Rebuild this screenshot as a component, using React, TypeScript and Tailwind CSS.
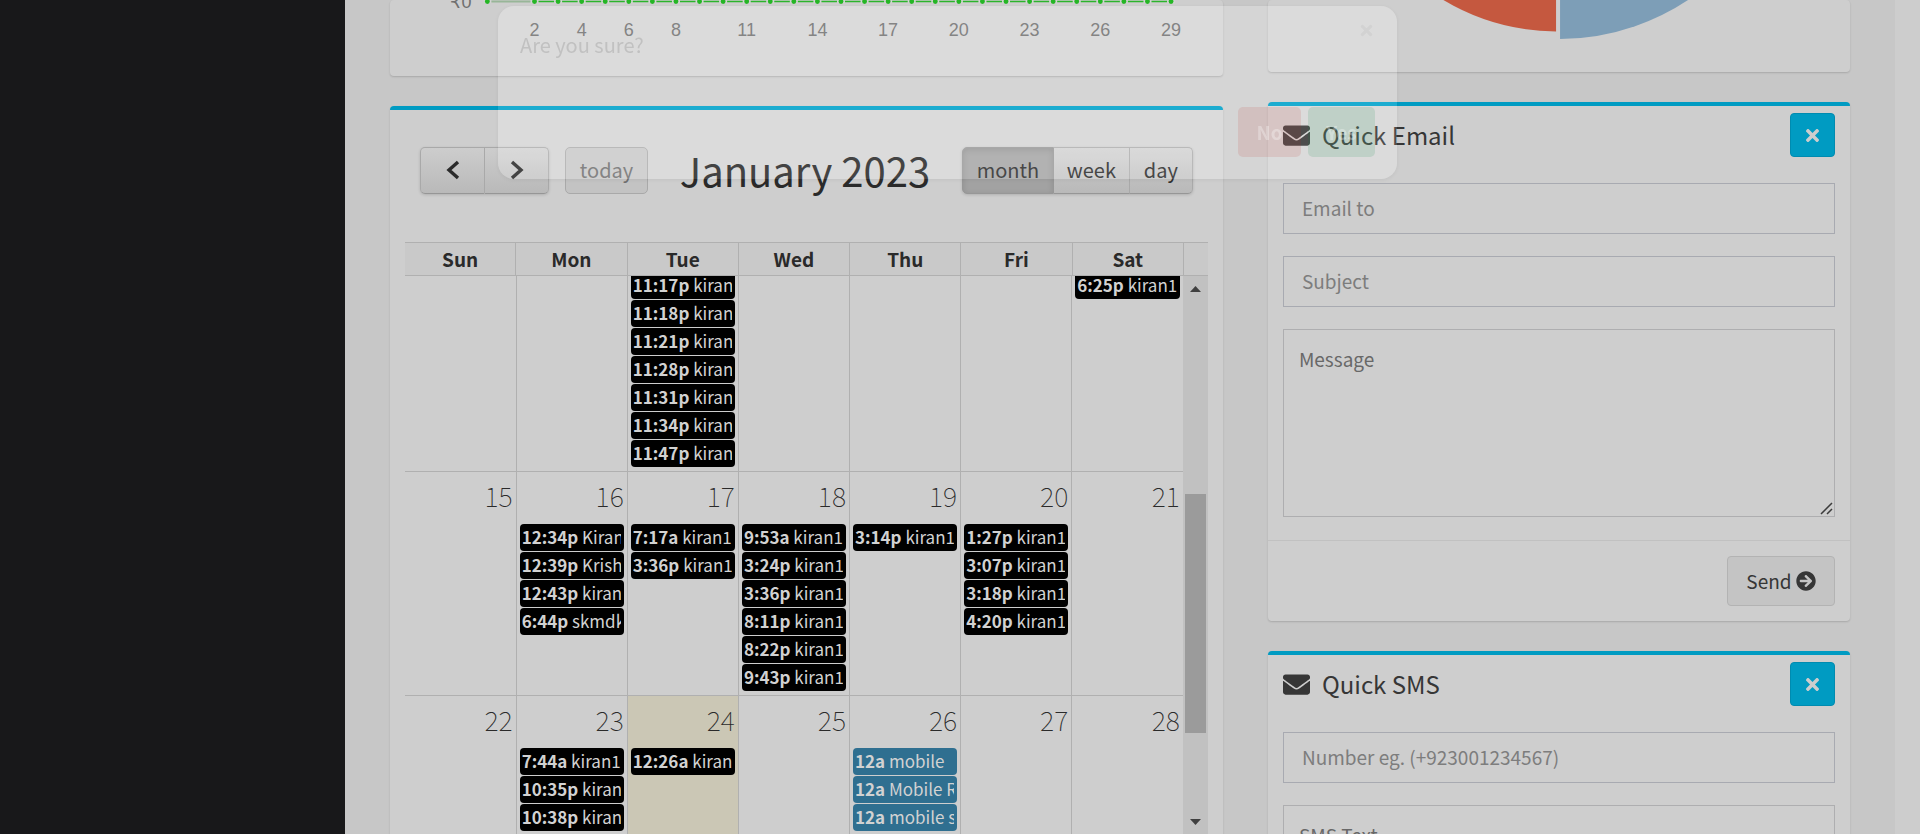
import React from "react";
import { FaArrowCircleRight, FaEnvelope, FaTimes } from "react-icons/fa";

type CalendarEvent = { time: string; title: string; blue?: boolean };
type Day = { date: number; today?: boolean; events: CalendarEvent[] };

const ev = (time: string, title: string, blue = false): CalendarEvent => ({ time, title, blue });

const weeks: Day[][] = [
  [
    { date: 15, events: [] },
    {
      date: 16,
      events: [ev("12:34p", "Kiran"), ev("12:39p", "Krishna"), ev("12:43p", "kiran1"), ev("6:44p", "skmdk")],
    },
    { date: 17, events: [ev("7:17a", "kiran1"), ev("3:36p", "kiran1")] },
    {
      date: 18,
      events: [
        ev("9:53a", "kiran1"),
        ev("3:24p", "kiran1"),
        ev("3:36p", "kiran1"),
        ev("8:11p", "kiran1"),
        ev("8:22p", "kiran1"),
        ev("9:43p", "kiran1"),
      ],
    },
    { date: 19, events: [ev("3:14p", "kiran1")] },
    {
      date: 20,
      events: [ev("1:27p", "kiran1"), ev("3:07p", "kiran1"), ev("3:18p", "kiran1"), ev("4:20p", "kiran1")],
    },
    { date: 21, events: [] },
  ],
  [
    { date: 22, events: [] },
    { date: 23, events: [ev("7:44a", "kiran1"), ev("10:35p", "kiran1"), ev("10:38p", "kiran1")] },
    { date: 24, today: true, events: [ev("12:26a", "kiran1")] },
    { date: 25, events: [] },
    {
      date: 26,
      events: [ev("12a", "mobile", true), ev("12a", "Mobile Repair", true), ev("12a", "mobile service", true)],
    },
    { date: 27, events: [] },
    { date: 28, events: [] },
  ],
];

const firstWeek: CalendarEvent[][] = [
  [],
  [],
  [
    ev("11:17p", "kiran1"),
    ev("11:18p", "kiran1"),
    ev("11:21p", "kiran1"),
    ev("11:28p", "kiran1"),
    ev("11:31p", "kiran1"),
    ev("11:34p", "kiran1"),
    ev("11:47p", "kiran1"),
  ],
  [],
  [],
  [],
  [ev("6:25p", "kiran1")],
];

const dayNames = ["Sun", "Mon", "Tue", "Wed", "Thu", "Fri", "Sat"];
const axisDays = [2, 4, 6, 8, 11, 14, 17, 20, 23, 26, 29];
const chartX = (day: number) => 144.5 + (day - 2) * 23.58;

function Events({ items }: { items: CalendarEvent[] }) {
  return (
    <div className="flex flex-col gap-px px-[3px] pb-1">
      {items.map((e) => (
        <a
          key={e.time + e.title}
          href="#event"
          className={
            "block h-[27px] overflow-hidden rounded-[4px] pr-[3px] pl-[2px] text-[17px] leading-[26px] text-[#d2d2d2] " +
            (e.blue ? "bg-[#2f6f90]" : "bg-black")
          }
        >
          <span className="block overflow-hidden whitespace-nowrap">
            <b className="font-bold">{e.time}</b> {e.title}
          </span>
        </a>
      ))}
    </div>
  );
}

function Box({ children, accent = true }: { children: React.ReactNode; accent?: boolean }) {
  return (
    <section
      className={
        "mb-[30px] rounded-[4px] bg-[#cecece] shadow-[0_1px_2px_rgba(0,0,0,0.16)] " +
        (accent ? "border-t-4 border-[#009bc2]" : "")
      }
    >
      {children}
    </section>
  );
}

function LineChart() {
  const days = Array.from({ length: 28 }, (_, i) => i + 2);
  return (
    <svg viewBox="0 0 833 76" className="block w-full" role="img" aria-label="Daily income">
      <text x="60" y="8" fontSize="18" fill="#707070" className="font-['Liberation_Sans','DejaVu_Sans',sans-serif]">
        ₹0
      </text>
      <path d={`M97 1.5H${chartX(2)}`} stroke="#98b698" strokeWidth="2" />
      <path d={`M${chartX(2)} 1.5H${chartX(29)}`} stroke="#2cb42c" strokeWidth="1.4" />
      {[0, ...days].map((d) => (
        <g key={d}>
          <rect x={chartX(d) - 4} y="0" width="8" height="3" fill="#d3d3d3" />
          <circle cx={chartX(d)} cy="1.5" r="2.4" fill="#25b625" />
        </g>
      ))}
      {axisDays.map((d) => (
        <text
          key={d}
          x={chartX(d)}
          y="36"
          fontSize="18"
          textAnchor="middle"
          fill="#707070"
          className="font-['Liberation_Sans',sans-serif]"
        >
          {d}
        </text>
      ))}
    </svg>
  );
}

function PieChart() {
  return (
    <svg viewBox="0 0 582 72" className="block w-full" role="img" aria-label="Income split">
      <path d="M288 -10V31.5A226 226 0 0 1 160 -10Z" fill="#c5583f" />
      <path d="M292 -10V39A235 235 0 0 0 434 -10Z" fill="#7d9eb7" />
    </svg>
  );
}

function Chevron({ d }: { d: string }) {
  return (
    <svg width="14" height="20" viewBox="0 0 14 20" fill="none" stroke="#2b2b2b" strokeWidth="3.4">
      <path d={d} />
    </svg>
  );
}

function Toolbar() {
  return (
    <div className="flex h-[47px] items-center justify-between">
      <div className="flex gap-4">
        <div className="flex rounded-[5px] shadow-[0_1px_3px_rgba(0,0,0,0.15)]">
          <button
            aria-label="Previous"
            className="flex h-[47px] w-[65px] items-center justify-center rounded-l-[5px] border border-[#a9a9a9] border-b-[#969696] bg-linear-to-b from-[#cdcdcd] to-[#b9b9b9]"
          >
            <Chevron d="M12 2 3 10l9 8" />
          </button>
          <button
            aria-label="Next"
            className="flex h-[47px] w-16 items-center justify-center rounded-r-[5px] border border-l-0 border-[#a9a9a9] border-b-[#969696] bg-linear-to-b from-[#cdcdcd] to-[#b9b9b9]"
          >
            <Chevron d="M2 2l9 8-9 8" />
          </button>
        </div>
        <button className="h-[47px] w-[83px] rounded-[5px] border border-[#a9a9a9] bg-[#c3c3c3] text-[20px] text-[#707070]">
          today
        </button>
      </div>
      <h2 className="text-[40px] leading-[47px] whitespace-nowrap text-[#2a2a2a]">January 2023</h2>
      <div className="flex rounded-[5px] text-[20px] text-[#2f2f2f] shadow-[0_1px_3px_rgba(0,0,0,0.15)]">
        <button className="h-[47px] w-[92px] rounded-l-[5px] border border-[#979797] bg-[#a2a2a2] shadow-[inset_0_2px_6px_rgba(0,0,0,0.12)]">
          month
        </button>
        <button className="h-[47px] w-[76px] border-y border-r border-[#a9a9a9] border-b-[#969696] bg-linear-to-b from-[#cdcdcd] to-[#b9b9b9]">
          week
        </button>
        <button className="h-[47px] w-[63px] rounded-r-[5px] border-y border-r border-[#a9a9a9] border-b-[#969696] bg-linear-to-b from-[#cdcdcd] to-[#b9b9b9]">
          day
        </button>
      </div>
    </div>
  );
}

function Calendar() {
  return (
    <div className="px-[15px] pt-[37px] pb-[15px]">
      <div className="px-[15px]">
        <Toolbar />
      </div>
      <div className="mt-12 flex border-y border-[#b0b0b0] bg-[#c9c9c9]">
        <div className="grid flex-1 grid-cols-7">
          {dayNames.map((d) => (
            <div
              key={d}
              className="border-r border-[#b0b0b0] text-center text-[19px] leading-8 font-bold text-[#2a2a2a]"
            >
              {d}
            </div>
          ))}
        </div>
        <div className="w-6" />
      </div>
      <div className="flex h-[563px]">
        <div className="min-w-0 flex-1 overflow-hidden">
          <table className="-mt-1 w-full table-fixed border-collapse">
            <tbody>
              <tr>
                {firstWeek.map((items, i) => (
                  <td
                    key={dayNames[i]}
                    className="border-r border-b border-[#b0b0b0] p-0 align-top last:border-r-0"
                  >
                    <Events items={items} />
                  </td>
                ))}
              </tr>
              {weeks.map((week) => (
                <tr key={week[0].date} className="h-56">
                  {week.map((day) => (
                    <td
                      key={day.date}
                      className={
                        "border-r border-b border-[#b0b0b0] p-0 align-top last:border-r-0 " +
                        (day.today ? "bg-[#cbc7b5]" : "")
                      }
                    >
                      <div className="h-[52px] pr-[3px] text-right text-[27px] leading-[48px] font-thin text-[#2a2a2a]">
                        {day.date}
                      </div>
                      <Events items={day.events} />
                    </td>
                  ))}
                </tr>
              ))}
            </tbody>
          </table>
        </div>
        <div className="flex w-[25px] flex-col items-center bg-[#c1c1c1]">
          <svg width="11" height="6" viewBox="0 0 11 6" className="mt-[10px]" fill="#404040">
            <path d="M0 6 5.5 0 11 6z" />
          </svg>
          <div className="mt-[202px] h-[239px] w-[21px] bg-[#9b9b9b]" />
          <svg width="11" height="6" viewBox="0 0 11 6" className="mt-[86px]" fill="#404040">
            <path d="M0 0h11L5.5 6z" />
          </svg>
        </div>
      </div>
    </div>
  );
}

function BoxHeader({ title }: { title: string }) {
  return (
    <header className="flex h-[62px] items-start justify-between px-[15px] pt-[7px]">
      <h3 className="flex items-center gap-3 pt-[4px] text-[24px] leading-9 text-[#363636]">
        <FaEnvelope size={27} />
        {title}
      </h3>
      <button
        aria-label={"Remove " + title}
        className="flex h-11 w-[45px] items-center justify-center rounded-[4px] border border-[#008bb0] bg-[#009bc2] text-[#cdcdcd]"
      >
        <FaTimes size={19} />
      </button>
    </header>
  );
}

function Field({ label, type = "text" }: { label: string; type?: string }) {
  return (
    <input
      type={type}
      aria-label={label}
      placeholder={label}
      className="mb-[22px] block h-[51px] w-full border border-[#a8aab1] bg-transparent px-[18px] pb-[2px] text-[19px] text-[#444444] placeholder:text-[#7d7d7d]"
    />
  );
}

function Area({ label }: { label: string }) {
  return (
    <div className="relative">
      <textarea
        aria-label={label}
        placeholder={label}
        className="block h-[188px] w-full resize-none border border-[#aeaeb0] bg-transparent px-[15px] py-[14px] text-[19px] leading-[30px] text-[#444444] placeholder:text-[#686868]"
      />
      <svg
        width="13"
        height="13"
        viewBox="0 0 13 13"
        className="pointer-events-none absolute right-[2px] bottom-[2px]"
        stroke="#3c3c3c"
        strokeWidth="1.5"
      >
        <path d="M1 12 12 1M7 12l5-5" />
      </svg>
    </div>
  );
}

function ConfirmDialog() {
  return (
    <div
      role="dialog"
      aria-label="Are you sure?"
      className="absolute top-[6px] left-[498px] flex h-[173px] w-[899px] flex-col justify-between rounded-[16px] bg-white/11 shadow-[0_1px_4px_rgba(0,0,0,0.06)] backdrop-brightness-[1.045]"
    >
      <div className="flex items-start justify-between pt-[17px] pr-6 pl-[22px] text-[#c1c1c1]">
        <h4 className="pt-[4px] text-[20px] leading-9">Are you sure?</h4>
        <button aria-label="Close" className="flex h-[14px] w-[13px] items-center justify-center text-[#d2d2d2]">
          <FaTimes size={17} />
        </button>
      </div>
      <div className="flex justify-end gap-[7px] pr-[22px] pb-[22px] text-[19px] font-bold text-white/30">
        <button className="h-[50px] w-[63px] rounded-[5px] bg-[rgba(190,45,35,0.12)]">No</button>
        <button className="h-[50px] w-[67px] rounded-[5px] bg-[rgba(0,135,65,0.13)]">Yes</button>
      </div>
    </div>
  );
}

export default function App() {
  return (
    <div className="relative flex h-screen overflow-hidden bg-[#c7c7c7] font-['Noto_Sans_CJK_JP','Noto_Sans_CJK_SC',sans-serif]">
      <aside className="w-[345px] shrink-0 bg-[#18181a]" />
      <main className="flex min-w-0 flex-1 items-start pr-[23px] pl-[22px]">
        <div className="w-7/12 pr-[22px] pl-[23px]">
          <Box accent={false}>
            <LineChart />
          </Box>
          <Box>
            <Calendar />
          </Box>
        </div>
        <div className="w-5/12 pr-[22px] pl-[23px]">
          <Box accent={false}>
            <PieChart />
          </Box>
          <Box>
            <BoxHeader title="Quick Email" />
            <div className="px-[15px] pt-[15px] pb-[23px]">
              <Field label="Email to" type="email" />
              <Field label="Subject" />
              <Area label="Message" />
            </div>
            <footer className="flex justify-end border-t border-[#c1c1c1] px-[15px] py-[15px]">
              <button className="flex h-[50px] w-[108px] items-center justify-center gap-1 rounded-[4px] border border-[#b3b3b3] bg-[#c4c4c4] text-[19px] text-[#363636]">
                Send <FaArrowCircleRight size={20} />
              </button>
            </footer>
          </Box>
          <Box>
            <BoxHeader title="Quick SMS" />
            <div className="px-[15px] pt-[15px] pb-[23px]">
              <Field label="Number eg. (+923001234567)" type="tel" />
              <Area label="SMS Text" />
            </div>
          </Box>
        </div>
      </main>
      <div className="w-[25px] shrink-0 bg-[#cdcdcd]" />
      <ConfirmDialog />
    </div>
  );
}
